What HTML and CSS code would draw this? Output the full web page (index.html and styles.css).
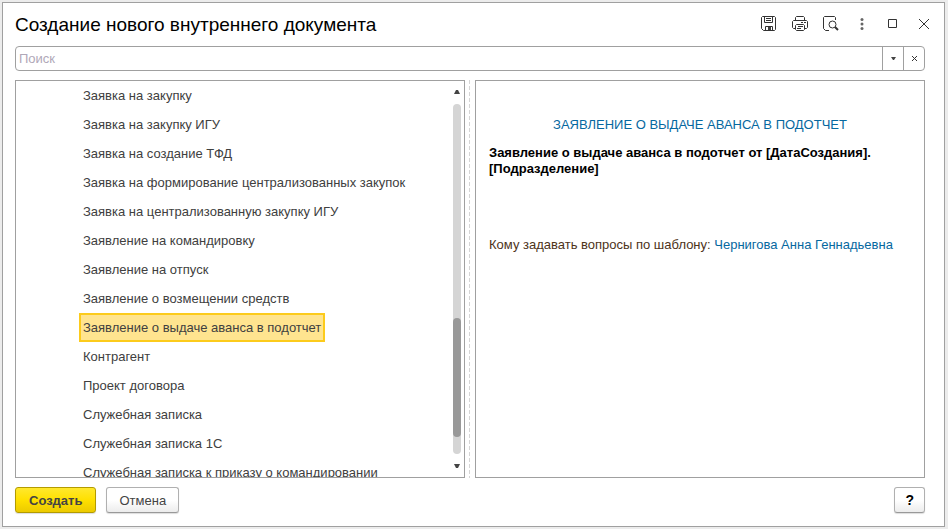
FILE: index.html
```html
<!DOCTYPE html>
<html lang="ru">
<head>
  <meta charset="UTF-8" />
  <meta name="viewport" content="width=device-width, initial-scale=1" />
  <title>Создание нового внутреннего документа</title>
  <link rel="stylesheet" href="styles.css">
</head>
<body>
  <div class="window">
    <header class="header">
      <h1 class="title">Создание нового внутреннего документа</h1>
      <div class="tools">
        <button class="tool" type="button" aria-label="Сохранить">
          <svg width="16" height="16" viewBox="0 0 16 16">
            <path d="M1.5 .5h12l1 1v12l-1 1h-11l-2-2v-11z" />
            <path d="M3.500 .5v6h8v-6M5 2.500h5M5 4.500h5M4.500 14.500v-4h7v4" />
            <path class="fill" d="M7 11h3v3H7z" />
          </svg>
        </button>
        <button class="tool" type="button" aria-label="Печать">
          <svg width="16" height="16" viewBox="0 0 16 16">
            <path d="M3.5 4.500v-3l1-1h7l1 1v3M3.500 12.500h-2l-1-1v-6l1-1h13l1 1v6l-1 1h-2" />
            <path d="M4.500 8.500h7l1 1v4l-1 1h-7l-1-1v-4zM6 10.500h5M5 12.500h4M9 6.500h2M12 6.500h2" />
          </svg>
        </button>
        <button class="tool" type="button" aria-label="Предварительный просмотр">
          <svg width="16" height="16" viewBox="0 0 16 16">
            <path d="M6 14.500H2.500l-2-2v-11l1-1h10l1 1V4" />
            <circle cx="9.500" cy="8.500" r="3.500" />
            <path class="thick" d="M12 11l3 3" />
          </svg>
        </button>
        <button class="tool" type="button" aria-label="Ещё">
          <svg class="dots" width="16" height="16" viewBox="0 0 16 16">
            <circle cx="8" cy="3.500" r="1.500" />
            <circle cx="8" cy="8" r="1.500" />
            <circle cx="8" cy="12.500" r="1.500" />
          </svg>
        </button>
        <button class="tool" type="button" aria-label="Развернуть">
          <svg width="16" height="16" viewBox="0 0 16 16">
            <path d="M3.500 3.500h8v8h-8z" />
          </svg>
        </button>
        <button class="tool" type="button" aria-label="Закрыть">
          <svg width="16" height="16" viewBox="0 0 16 16">
            <path d="M3 3l10 10M13 3L3 13" />
          </svg>
        </button>
      </div>
    </header>

    <div class="search">
      <input class="search-input" type="text" placeholder="Поиск" aria-label="Поиск" />
      <button class="search-btn" type="button" aria-label="История поиска">
        <svg width="5" height="3" viewBox="0 0 5 3"><path class="fill" d="M0 0h5L3 3H2z" /></svg>
      </button>
      <button class="search-btn" type="button" aria-label="Очистить">
        <svg width="7" height="7" viewBox="0 0 7 7"><path d="M1 1l5 5M6 1L1 6" /></svg>
      </button>
    </div>

    <main class="content">
      <section class="panel templates">
        <ul class="list">
          <li class="item">Заявка на закупку</li>
          <li class="item">Заявка на закупку ИГУ</li>
          <li class="item">Заявка на создание ТФД</li>
          <li class="item">Заявка на формирование централизованных закупок</li>
          <li class="item">Заявка на централизованную закупку ИГУ</li>
          <li class="item">Заявление на командировку</li>
          <li class="item">Заявление на отпуск</li>
          <li class="item">Заявление о возмещении средств</li>
          <li class="item item-selected">Заявление о выдаче аванса в подотчет</li>
          <li class="item">Контрагент</li>
          <li class="item">Проект договора</li>
          <li class="item">Служебная записка</li>
          <li class="item">Служебная записка 1С</li>
          <li class="item">Служебная записка к приказу о командировании</li>
        </ul>
        <div class="scrollbar">
          <svg width="6" height="4" viewBox="0 0 6 4"><path class="fill" d="M2 0h2l2 4H0z" /></svg>
          <div class="track">
            <div class="thumb"></div>
          </div>
          <svg width="6" height="4" viewBox="0 0 6 4"><path class="fill" d="M0 0h6L4 4H2z" /></svg>
        </div>
      </section>

      <div class="splitter"></div>

      <section class="panel preview">
        <h2 class="preview-title">ЗАЯВЛЕНИЕ О ВЫДАЧЕ АВАНСА В ПОДОТЧЕТ</h2>
        <p class="preview-name">Заявление о выдаче аванса в подотчет от [ДатаСоздания]. [Подразделение]</p>
        <p class="preview-contact">Кому задавать вопросы по шаблону: <a href="#">Чернигова Анна Геннадьевна</a></p>
      </section>
    </main>

    <footer class="footer">
      <button class="btn btn-primary" type="button">Создать</button>
      <button class="btn" type="button">Отмена</button>
      <button class="btn btn-help" type="button">?</button>
    </footer>
  </div>
</body>
</html>
```
FILE: styles.css
```css
* {
  box-sizing: border-box;
}

body {
  margin: 0;
  height: 100vh;
  padding: 2px 3px 2px 2px;
  background: #ececec;
  font-family: "Liberation Sans", Arial, sans-serif;
  font-size: 13px;
  color: #404040;
}

button {
  font-family: inherit;
  cursor: pointer;
}

svg {
  display: block;
  fill: none;
  stroke: #333;
}

.fill {
  fill: #444;
  stroke: none;
}

.dots {
  fill: #666;
  stroke: none;
}

.thick {
  stroke-width: 2;
}

.window {
  display: flex;
  flex-direction: column;
  height: 100%;
  padding: 0 19px 13px 12px;
  background: #fff;
  border: 1px solid #a0a0a0;
}

/* title bar */
.header {
  display: flex;
  align-items: center;
  justify-content: space-between;
  height: 43px;
}

.title {
  margin: 0;
  font-size: 19px;
  font-weight: normal;
  color: #000;
}

.tools {
  display: flex;
  gap: 15px;
  margin-right: -7px;
  padding-bottom: 2px;
}

.tool {
  padding: 0;
  border: none;
  background: none;
}

/* search */
.search {
  display: flex;
  height: 25px;
  border: 1px solid #a0a0a0;
  border-radius: 4px;
}

.search-input {
  flex: 1;
  min-width: 0;
  padding: 0 3px;
  border: none;
  outline: none;
  background: none;
  font-family: inherit;
  font-size: 13px;
}

.search-input::placeholder {
  color: #b0a8b8;
}

.search-btn {
  display: flex;
  align-items: center;
  justify-content: center;
  width: 21px;
  padding: 0;
  border: none;
  border-left: 1px solid #a0a0a0;
  background: none;
}

/* panels */
.content {
  display: grid;
  grid-template-columns: minmax(0, 1fr) 10px minmax(0, 1fr);
  grid-template-rows: minmax(0, 1fr);
  flex: 1;
  min-height: 0;
  margin: 9px 0;
}

.panel {
  border: 1px solid #a0a0a0;
}

.templates {
  display: flex;
  overflow: hidden;
}

.list {
  flex: 1;
  margin: 0;
  padding: 0 0 0 63px;
  list-style: none;
}

.item {
  width: fit-content;
  height: 29px;
  padding: 0 2px;
  border: 2px solid transparent;
  line-height: 25px;
  white-space: nowrap;
}

.item-selected {
  background: #ffe48f;
  border-color: #fccb1c;
}

.scrollbar {
  display: flex;
  flex-direction: column;
  align-items: center;
  gap: 10px;
  padding: 9px 3px;
}

.track {
  position: relative;
  flex: 1;
  width: 8px;
  border-radius: 4px;
  background: #d5d5d5;
}

.thumb {
  position: absolute;
  top: 61%;
  width: 8px;
  height: 34%;
  border-radius: 4px;
  background: #999;
}

.splitter {
  background: repeating-linear-gradient(#d5d5d5 0 4px, transparent 4px 6px) 4px 0 / 1px 100% no-repeat;
}

.preview {
  padding: 36px 13px;
  line-height: 16px;
}

.preview-title {
  margin: 0 0 12px;
  font-size: 13px;
  font-weight: normal;
  text-align: center;
  color: #0668a0;
}

.preview-name {
  margin: 0 0 60px;
  font-weight: bold;
  color: #000;
}

.preview-contact {
  margin: 0;
  color: #4d3319;
}

.preview-contact a {
  color: #0668a0;
  text-decoration: none;
}

/* buttons */
.footer {
  display: flex;
  gap: 10px;
}

.btn {
  height: 26px;
  padding: 0 12px;
  border: 1px solid #b0b0b0;
  border-bottom-color: #999;
  border-radius: 3px;
  background: linear-gradient(#fff 50%, #ececec);
  box-shadow: 0 1px 1px #ddd;
  font-size: 13px;
  color: #444;
}

.btn-primary {
  padding: 0 13px;
  border-color: #b39b00;
  background: linear-gradient(#ffe82e, #ffe000 50%, #ecca00);
  font-weight: bold;
}

.btn-help {
  margin-left: auto;
  padding: 0 10px;
  font-size: 14px;
  font-weight: bold;
  color: #000;
}
```
